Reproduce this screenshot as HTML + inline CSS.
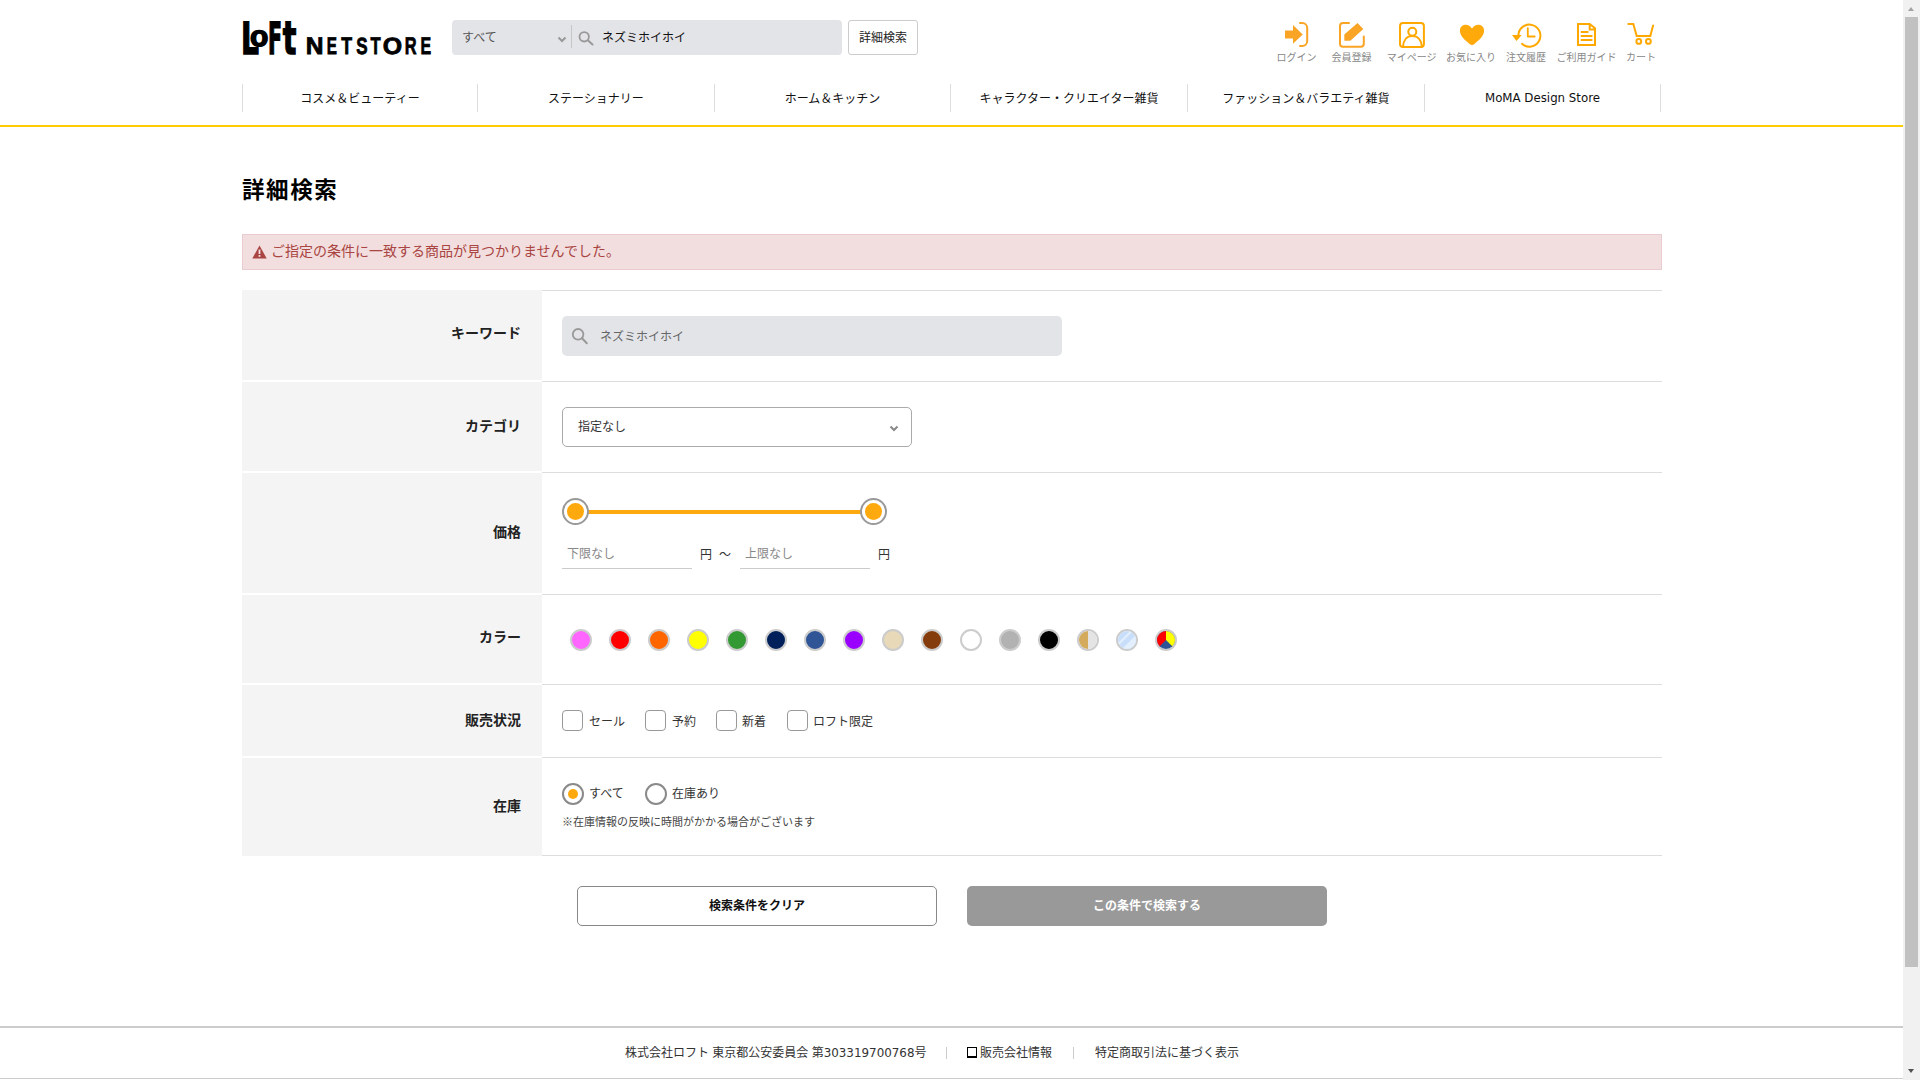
<!DOCTYPE html>
<html lang="ja">
<head>
<meta charset="utf-8">
<title>詳細検索 | LOFT NETSTORE</title>
<style>
*{box-sizing:border-box;margin:0;padding:0}
html,body{width:1920px;height:1080px;overflow:hidden;background:#fff}
body{font-family:"Liberation Sans","Noto Sans CJK JP",sans-serif;color:#333;font-size:12px;position:relative}
a{color:inherit;text-decoration:none}
#page{position:absolute;left:0;top:0;width:1903px;height:1080px;overflow:hidden}
.abs{position:absolute;white-space:nowrap}
/* scrollbar */
#sb{position:absolute;left:1903px;top:0;width:17px;height:1080px;background:#f1f1f1}
#sb .thumb{position:absolute;left:2px;top:17px;width:13px;height:950px;background:#c1c1c1}
#sb .up,#sb .dn{position:absolute;left:5px;width:0;height:0;border-left:3.5px solid transparent;border-right:3.5px solid transparent}
#sb .up{top:7px;border-bottom:4px solid #a3a3a3}
#sb .dn{top:1069px;border-top:4px solid #505050}
/* header */
#logo{position:absolute;left:240px;top:14px;width:200px;height:48px;overflow:visible}
#search{position:absolute;left:452px;top:20px;width:390px;height:35px;background:#e3e4e8;border-radius:4px}
#search .sel{position:absolute;left:10px;top:0;line-height:36px;font-size:12px;color:#555}
#search .sep{position:absolute;left:119px;top:5px;width:1px;height:23px;background:#c6c6c6}
#search .kw{position:absolute;left:150px;top:0;line-height:37px;font-size:12px;color:#111}
#search svg{position:absolute;left:0;top:0}
#adv{position:absolute;left:848px;top:20px;width:70px;height:35px;border:1px solid #ccc;border-radius:3px;font-size:12px;line-height:35px;text-align:center;color:#222;background:#fff}
#uicons{position:absolute;left:1280px;top:18px}
.ulab{position:absolute;top:51px;font-size:10px;line-height:14px;color:#888;white-space:nowrap;transform:translateX(-50%)}
#gnav{position:absolute;left:242px;top:84px;width:1419px;height:28px;border-right:1px solid #ddd}
#gnav a{position:absolute;top:0;height:28px;border-left:1px solid #ddd;text-align:center;font-size:12px;line-height:27px;padding-top:2px;color:#111;white-space:nowrap}
#gnav a.en{font-family:"DejaVu Sans","Liberation Sans",sans-serif;font-size:11.8px;padding-right:0;padding-top:1px}
#yline{position:absolute;left:0;top:125px;width:1903px;height:2px;background:#ffcc00}
h1{position:absolute;left:242px;top:173px;font-size:22.5px;letter-spacing:1.6px;line-height:36px;font-weight:bold;color:#000}
#alert{position:absolute;left:242px;top:234px;width:1420px;height:36px;background:#f2dede;border:1px solid #ebccd1;color:#a94442;font-size:14px;line-height:33px;padding-left:28px}
#alert svg{position:absolute;left:9px;top:10px}
/* form table */
.row{position:absolute;left:242px;width:1420px}
.row .th{position:absolute;left:0;top:1px;bottom:1px;width:300px;background:#f4f4f4;font-weight:bold;font-size:14px;color:#222;text-align:right;padding-right:21px}
.row.first .th{top:0}
.row .td{position:absolute;left:300px;top:0;right:0;bottom:0;border-top:1px solid #ddd}
.kwbox{position:absolute;left:20px;top:25px;width:500px;height:40px;background:#e3e4e8;border-radius:5px;font-size:12px;color:#666;line-height:42px;padding-left:38px}
.kwbox svg{position:absolute;left:0;top:0}
.selbox{position:absolute;left:20px;top:25px;width:350px;height:40px;border:1px solid #aaa;border-radius:5px;font-size:12px;color:#333;line-height:38px;padding-left:15px;background:#fff}
.selbox svg{position:absolute;right:12px;top:17px}
.track{position:absolute;left:33px;top:37px;width:298px;height:4px;background:#fea90d}
.knob{position:absolute;top:25px;width:27px;height:27px;border:2px solid #999;border-radius:50%;background:#fff}
.knob i{position:absolute;left:3px;top:3px;width:17px;height:17px;border-radius:50%;background:#fea90d}
.pin{position:absolute;top:68px;width:130px;height:28px;border-bottom:1px solid #ccc;font-size:12px;color:#888;line-height:26px;padding-left:5px}
.yen{position:absolute;top:69px;font-size:12px;line-height:26px;color:#333}
.sw{position:absolute;top:34px;width:22px;height:22px;border:2px solid #ccc;border-radius:50%;overflow:hidden}
.sw svg{display:block}
.cb{position:absolute;top:25px;width:21px;height:21px;border:1px solid #999;border-radius:4px;background:#fff}
.cl{position:absolute;top:26px;font-size:12px;line-height:22px;color:#333}
.rb{position:absolute;top:25px;width:22px;height:22px;border:2px solid #8a8a8a;border-radius:50%;background:#fff}
.rb i{position:absolute;left:4px;top:4px;width:10px;height:10px;border-radius:50%;background:#fea90d}
.note{position:absolute;left:20px;top:56px;font-size:11px;line-height:16px;color:#444}
.btn{position:absolute;top:886px;width:360px;height:40px;border-radius:5px;font-size:12px;font-weight:bold;text-align:center;line-height:38px}
#foot{position:absolute;left:0;top:1026px;width:1903px;height:53px;border-top:2px solid #ccc;border-bottom:1px solid #ccc;font-size:12px;color:#333}
#foot span,#foot a{position:absolute;top:15px;line-height:20px;white-space:nowrap}
#foot .num{font-family:"DejaVu Sans","Liberation Sans",sans-serif;font-size:11.9px;font-weight:normal}
#foot .bar{position:absolute;top:19px;width:1px;height:12px;background:#ccc}
#foot .win{position:absolute;left:967px;top:19px;width:10px;height:11px;border:1px solid #000;border-top-width:1.5px;border-bottom-width:2px}
</style>
</head>
<body>
<div id="page">
  <svg id="logo" viewBox="240 14 200 48" width="200" height="48" font-family="Liberation Sans, sans-serif" font-weight="bold" fill="#000" text-rendering="geometricPrecision"><text stroke="#000" stroke-width="1.4" stroke-linejoin="miter"><tspan x="241.01" y="54.10" font-size="44.44" textLength="17.96" lengthAdjust="spacingAndGlyphs" font-family="DejaVu Sans, sans-serif">L</tspan><tspan x="249.93" y="46.31" font-size="29.01" textLength="18.34" lengthAdjust="spacingAndGlyphs">o</tspan><tspan x="267.91" y="54.10" font-size="44.44" textLength="14.01" lengthAdjust="spacingAndGlyphs" font-family="DejaVu Sans, sans-serif">F</tspan><tspan x="282.73" y="54.10" font-size="46.15" textLength="13.63" lengthAdjust="spacingAndGlyphs" font-family="DejaVu Sans, sans-serif">t</tspan></text>
<text stroke="#000" stroke-width="0.8"><tspan x="305.75" y="54.30" font-size="24.13" textLength="17.75" lengthAdjust="spacingAndGlyphs">N</tspan><tspan x="326.63" y="54.30" font-size="24.13" textLength="10.17" lengthAdjust="spacingAndGlyphs">E</tspan><tspan x="341.20" y="54.30" font-size="24.13" textLength="10.84" lengthAdjust="spacingAndGlyphs">T</tspan><tspan x="356.16" y="54.07" font-size="23.45" textLength="11.36" lengthAdjust="spacingAndGlyphs">S</tspan><tspan x="370.62" y="54.30" font-size="24.13" textLength="10.16" lengthAdjust="spacingAndGlyphs">T</tspan><tspan x="382.88" y="54.07" font-size="23.45" textLength="19.36" lengthAdjust="spacingAndGlyphs">O</tspan><tspan x="404.70" y="54.30" font-size="24.13" textLength="11.85" lengthAdjust="spacingAndGlyphs">R</tspan><tspan x="420.58" y="54.30" font-size="24.13" textLength="10.64" lengthAdjust="spacingAndGlyphs">E</tspan></text></svg>
  <div id="search"><span class="sel">すべて</span><span class="sep"></span>
    <svg width="160" height="35" viewBox="452 20 160 35" fill="none" stroke="#999" stroke-width="2"><path d="M558.5 37.5l3.5 3.5 3.5-3.5"/><circle cx="584.2" cy="36.8" r="4.7" stroke-width="1.8"/><path d="M587.8 40.300l4.700 4.200" stroke-linecap="round"/></svg>
    <span class="kw">ネズミホイホイ</span></div>
  <a id="adv">詳細検索</a>
  <svg id="uicons" width="380" height="32" viewBox="1280 18 380 32" fill="none" stroke-width="2" stroke-linecap="round" stroke-linejoin="round">
    <g stroke="#f9a425" fill="none">
      <path d="M1285 30.4h8v-5.3l9.7 9.3-9.7 9.4v-5.4h-8z" fill="#f9a425" stroke="none"/>
      <path d="M1300 22.9h2.2a5 5 0 0 1 5 5v13.1a5 5 0 0 1-5 5h-2.2"/>
      <path d="M1349 22.9h-6a3 3 0 0 0-3 3v17.8a3 3 0 0 0 3 3h17.8a3 3 0 0 0 3-3v-7.3"/>
      <path d="M1357.5 22.9l5.8 6.1-12.9 11.8h-6.1v-6.4z" fill="#f9a425" stroke="none"/>
    </g>
    <g stroke="#ffa800">
      <rect x="1400" y="23" width="23.9" height="23.9" rx="3"/>
      <circle cx="1412.3" cy="31.8" r="4"/>
      <path d="M1403 46.9c0.3-7 4-10.9 9.3-10.9s9.2 3.900 9.500 10.900"/>
      <path d="M1472 28.400C1470 25.600 1467.300 24.600 1465 24.800C1461.500 25.200 1459.500 28.300 1460 31.800C1460.700 37.400 1466.200 40.700 1469.600 44.100C1471 45.400 1473 45.400 1474.400 44.100C1477.800 40.700 1483.300 37.400 1484 31.800C1484.500 28.300 1482.500 25.200 1479 24.800C1476.700 24.600 1474 25.600 1472 28.400z" fill="#ffaa0a" stroke="none"/>
      <path d="M1518.400 35a11 11 0 1 1 3.600 8.800" stroke-width="2"/>
      <path d="M1512 35h9.700l-5.200 6z" fill="#ffa800" stroke="none"/>
      <path d="M1527.800 28.200v8.300h6.900" stroke-width="1.800"/>
      <path d="M1578 23.900h11.700l5.300 4.300v16.800h-17z M1589.700 23.900v5.500h5.300" stroke-linejoin="miter"/>
      <path d="M1581.500 31.900h6.200M1581.500 35.900h10.200M1581.500 39.900h10.200"/>
      <path d="M1628.300 23.900h5l3.400 12h13.600l2.800-10.500" stroke-linejoin="miter"/>
      <circle cx="1638.800" cy="41.400" r="2.400"/><circle cx="1648.400" cy="41.400" r="2.400"/>
    </g>
  </svg>
  <span class="ulab" style="left:1296.500px">ログイン</span><span class="ulab" style="left:1351.500px">会員登録</span><span class="ulab" style="left:1411.700px">マイページ</span><span class="ulab" style="left:1471px">お気に入り</span><span class="ulab" style="left:1526px">注文履歴</span><span class="ulab" style="left:1586.400px">ご利用ガイド</span><span class="ulab" style="left:1641px">カート</span>
  <nav id="gnav"><a style="left:0;width:235px">コスメ＆ビューティー</a><a style="left:235px;width:237px">ステーショナリー</a><a style="left:472px;width:236px">ホーム＆キッチン</a><a style="left:708px;width:237px">キャラクター・クリエイター雑貨</a><a style="left:945px;width:237px">ファッション＆バラエティ雑貨</a><a class="en" style="left:1182px;width:236px">MoMA Design Store</a></nav>
  <div id="yline"></div>
  <h1>詳細検索</h1>
  <div id="alert"><svg width="15" height="14" viewBox="0 0 15 14"><path d="M7.500 .5L14.700 13.500H.3z" fill="#a94442"/><rect x="6.600" y="4.500" width="1.800" height="4.500" fill="#f2dede"/><rect x="6.600" y="10" width="1.800" height="1.800" fill="#f2dede"/></svg>ご指定の条件に一致する商品が見つかりませんでした。</div>

  <div class="row first" style="top:290px;height:91px"><div class="th" style="line-height:86px">キーワード</div><div class="td">
    <div class="kwbox"><svg width="40" height="40" viewBox="0 0 40 40" fill="none" stroke="#999" stroke-width="1.800"><circle cx="16.100" cy="18.300" r="5.300"/><path d="M20 22.200l4.800 5.100" stroke-linecap="round" stroke-width="2"/></svg>ネズミホイホイ</div>
  </div></div>
  <div class="row" style="top:381px;height:91px"><div class="th" style="line-height:89px">カテゴリ</div><div class="td">
    <div class="selbox">指定なし<svg width="10" height="7" viewBox="0 0 10 7" fill="none" stroke="#888" stroke-width="2"><path d="M1.500 1.500L5 5l3.500-3.500"/></svg></div>
  </div></div>
  <div class="row" style="top:472px;height:122px"><div class="th" style="line-height:119px">価格</div><div class="td">
    <div class="track"></div><div class="knob" style="left:20px"><i></i></div><div class="knob" style="left:318px"><i></i></div>
    <div class="pin" style="left:20px">下限なし</div><span class="yen" style="left:158px">円</span><span class="yen" style="left:177px">～</span>
    <div class="pin" style="left:198px">上限なし</div><span class="yen" style="left:336px">円</span>
  </div></div>
  <div class="row" style="top:594px;height:90px"><div class="th" style="line-height:85px">カラー</div><div class="td" id="colors"><span class="sw" style="left:28px;background:#ff66ff"></span><span class="sw" style="left:67px;background:#ff0000"></span><span class="sw" style="left:106px;background:#ff6600"></span><span class="sw" style="left:145px;background:#ffff00"></span><span class="sw" style="left:184px;background:#339933"></span><span class="sw" style="left:223px;background:#00205c"></span><span class="sw" style="left:262px;background:#2f5597"></span><span class="sw" style="left:301px;background:#9900ff"></span><span class="sw" style="left:340px;background:#e8d9b9"></span><span class="sw" style="left:379px;background:#843c0c"></span><span class="sw" style="left:418px;background:#ffffff"></span><span class="sw" style="left:457px;background:#b2b2b2"></span><span class="sw" style="left:496px;background:#000000"></span><span class="sw" style="left:535px"><svg width="18" height="18" viewBox="0 0 18 18"><rect width="9" height="18" fill="#d4aa5c"/><rect x="9" width="9" height="18" fill="#e4e4e4"/></svg></span><span class="sw" style="left:574px"><svg width="18" height="18" viewBox="0 0 18 18"><rect width="18" height="18" fill="#c9defa"/><path d="M-2 14L14 -2h3L-2 17z M2 20L20 2v9L11 20z" fill="#e3effc"/></svg></span><span class="sw" style="left:613px"><svg width="18" height="18" viewBox="0 0 18 18"><rect width="18" height="18" fill="#2f5597"/><path d="M9 9V-2H-2V18H0z" fill="#ff0000"/><path d="M9 9V-2H20V18H18z" fill="#ffff00"/></svg></span></div></div>
  <div class="row" style="top:684px;height:73px"><div class="th" style="line-height:71px">販売状況</div><div class="td">
    <span class="cb" style="left:20px"></span><span class="cl" style="left:47px">セール</span>
    <span class="cb" style="left:103px"></span><span class="cl" style="left:130px">予約</span>
    <span class="cb" style="left:174px"></span><span class="cl" style="left:200px">新着</span>
    <span class="cb" style="left:245px"></span><span class="cl" style="left:271px">ロフト限定</span>
  </div></div>
  <div class="row" style="top:757px;height:99px"><div class="th" style="bottom:0;line-height:96px">在庫</div><div class="td" style="border-bottom:1px solid #ddd">
    <span class="rb" style="left:20px"><i></i></span><span class="cl" style="left:47px;top:25px">すべて</span>
    <span class="rb" style="left:103px"></span><span class="cl" style="left:130px;top:25px">在庫あり</span>
    <div class="note">※在庫情報の反映に時間がかかる場合がございます</div>
  </div></div>
  <a class="btn" style="left:577px;border:1px solid #888;color:#111;background:#fff">検索条件をクリア</a>
  <a class="btn" style="left:967px;background:#999;color:#fff;line-height:40px">この条件で検索する</a>
  <div id="foot">
    <span style="left:625px">株式会社ロフト 東京都公安委員会 第<b class="num">303319700768</b>号</span>
    <i class="bar" style="left:946px"></i><i class="win"></i><a style="left:980px">販売会社情報</a>
    <i class="bar" style="left:1073px"></i><a style="left:1095px">特定商取引法に基づく表示</a>
  </div>
</div>
<div id="sb"><div class="up"></div><div class="thumb"></div><div class="dn"></div></div>
</body>
</html>
